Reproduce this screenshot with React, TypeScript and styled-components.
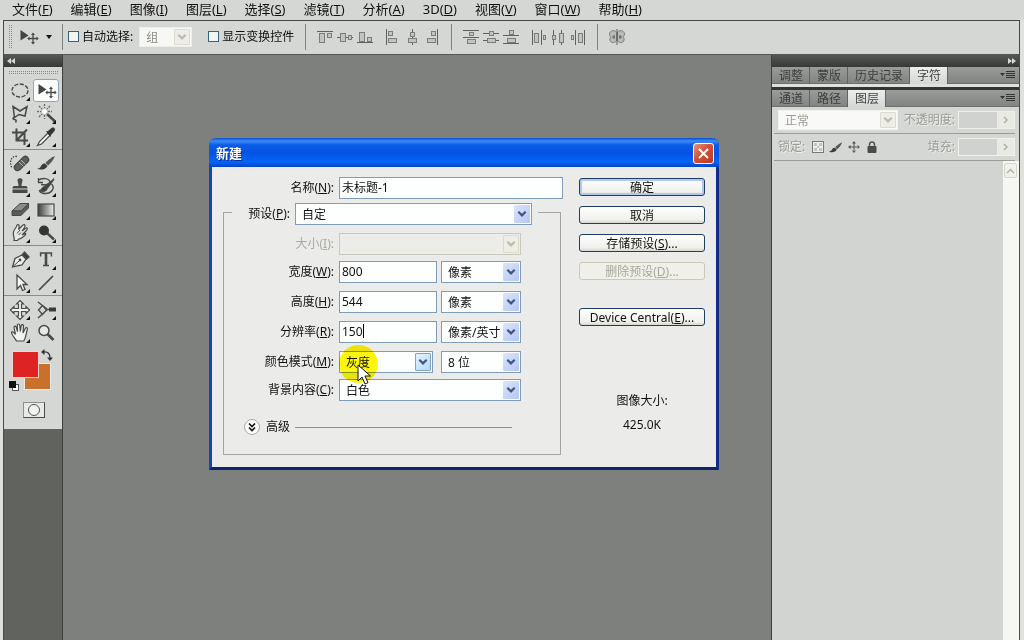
import React, { useState } from "react";
import styled, { createGlobalStyle, css } from "styled-components";

const FONT = '"Noto Sans", "Noto Sans CJK SC", sans-serif';

const GlobalStyle = createGlobalStyle`
  *, *::before, *::after { box-sizing: border-box; }
  html, body { margin: 0; background: #d5d7d4; }
  body, button, input, select {
    font-family: ${FONT};
    font-size: 12px;
    line-height: 16px;
    color: #111;
  }
  button, input, select { margin: 0; }
  fieldset { min-width: 0; }
`;

/* ---------- shell ---------- */

const Shell = styled.div`
  display: flex;
  flex-direction: column;
  min-height: 100vh;
  padding: 0 4px 0 3px;
  background: #dfe1dd;
  overflow: hidden;
`;

const MenuBar = styled.nav`
  display: flex;
  align-items: flex-start;
  gap: 18px;
  height: 20px;
  margin: 0 -4px 0 -3px;
  padding-left: 12px;
  background: #d5d7d4;
`;

const MenuItem = styled.button`
  border: 0;
  padding: 0;
  background: none;
  font-size: 13px;
  line-height: 18px;
  white-space: nowrap;
`;

const Frame = styled.div`
  flex: 1;
  display: flex;
  flex-direction: column;
  border: 1px solid #484a47;
  border-bottom: 0;
`;

const Workspace = styled.main`
  flex: 1;
  display: flex;
`;

const Canvas = styled.section`
  position: relative;
  flex: 1;
  min-width: 0;
  background: #7e807d;
  border-left: 1px solid #3d3f3c;
  border-right: 1px solid #3d3f3c;
`;

/* ---------- options bar ---------- */

const OptionsBar = styled.div`
  display: flex;
  align-items: center;
  height: 34px;
  padding-bottom: 2px;
  padding-left: 4px;
  background: #d5d7d4;
  border-bottom: 1px solid #555754;
`;

const Grip = styled.span<{ $wide?: boolean }>`
  display: block;
  width: ${(p) => (p.$wide ? "50px" : "4px")};
  height: ${(p) => (p.$wide ? "4px" : "24px")};
  margin: ${(p) => (p.$wide ? "4px auto 4px" : "0 8px 0 0")};
  background-image: conic-gradient(#8d8f8c 25%, transparent 0);
  background-size: 2px 2px;
`;

const ToolButton = styled.button<{ $active?: boolean }>`
  display: flex;
  align-items: center;
  justify-content: center;
  width: 26px;
  height: 23px;
  padding: 0;
  border: 1px solid ${(p) => (p.$active ? "#8fa3b5" : "transparent")};
  border-radius: 3px;
  background: ${(p) => (p.$active ? "#fbfcfc" : "none")};
`;

const PresetButton = styled.button`
  display: flex;
  align-items: center;
  gap: 6px;
  width: 42px;
  padding: 0;
  border: 0;
  background: none;
`;

const Divider = styled.span`
  width: 1px;
  height: 26px;
  background: #7f817e;
`;

const Check = styled.label<{ $gap: string }>`
  display: flex;
  align-items: center;
  gap: 3px;
  padding-left: ${(p) => p.$gap};
  white-space: nowrap;
  input {
    appearance: none;
    width: 11px;
    height: 11px;
    border: 1px solid #35627f;
    background: #f3f5f3;
  }
`;

const AlignGroup = styled.div`
  display: flex;
  gap: 4px;
  padding-left: 11px;
`;

const AlignButton = styled.button`
  display: flex;
  width: 16px;
  height: 16px;
  padding: 0;
  border: 0;
  background: none;
`;

/* ---------- shared select ---------- */

type SelectTone = "normal" | "disabled" | "hot";

const SelectBox = styled.span<{ $tone: SelectTone; $width: string }>`
  position: relative;
  display: flex;
  flex: none;
  width: ${(p) => p.$width};
  height: 22px;
  border: 1px solid ${(p) => (p.$tone === "disabled" ? "#c8c8bc" : "#7f9db9")};
  background: ${(p) => (p.$tone === "disabled" ? "#ecece8" : "#fdfefe")};
  select {
    flex: 1;
    min-width: 0;
    padding: 2px 18px 0 6px;
    border: 0;
    outline: 0;
    appearance: none;
    background: none;
    color: inherit;
    opacity: 1;
  }
`;

const SelectArrow = styled.span<{ $tone: SelectTone }>`
  position: absolute;
  top: 1px;
  right: 1px;
  bottom: 1px;
  width: 16px;
  display: flex;
  align-items: center;
  justify-content: center;
  pointer-events: none;
  border-radius: 1px;
  color: #3f5583;
  background: linear-gradient(135deg, #dbe6fc, #b4c6f2);
  ${(p) =>
    p.$tone === "disabled" &&
    css`
      color: #bcbcb0;
      background: #eeeee6;
      border: 1px solid #dddbcf;
    `}
  ${(p) =>
    p.$tone === "hot" &&
    css`
      background: linear-gradient(135deg, #e4f3ff, #b3d9fb);
      border: 1px solid #83a3c4;
    `}
`;

const Chevron = () => (
  <svg width="10" height="8" viewBox="0 0 10 8" fill="none" stroke="currentColor" strokeWidth="2.2">
    <path d="M1.3 1.7 5 5.4 8.7 1.7" />
  </svg>
);

function Select(props: {
  id?: string;
  label?: string;
  value: string;
  width: string;
  tone?: SelectTone;
}) {
  const tone = props.tone ?? "normal";
  return (
    <SelectBox $tone={tone} $width={props.width}>
      <select id={props.id} aria-label={props.label} disabled={tone === "disabled"}>
        <option>{props.value}</option>
      </select>
      <SelectArrow $tone={tone}>
        <Chevron />
      </SelectArrow>
    </SelectBox>
  );
}

const GroupSelect = styled.div`
  display: flex;
  padding-left: 6px;
  ${SelectBox} {
    height: 20px;
    border-color: #eceee8;
    background: #f7f8f5;
    color: #8b8d88;
  }
`;

/* ---------- tool column ---------- */

const ToolColumn = styled.aside`
  flex: none;
  width: 58px;
  background: #61635f;
`;

const DockHeader = styled.header<{ $right?: boolean }>`
  display: flex;
  align-items: center;
  justify-content: ${(p) => (p.$right ? "flex-end" : "flex-start")};
  height: 12px;
  padding: 0 3px;
  background: linear-gradient(#555754, #373937);
  color: #d8dad7;
`;

const ToolBody = styled.div`
  height: 362px;
  background: #d5d7d4;
  overflow: hidden;
`;

const ToolGroup = styled.div`
  display: grid;
  grid-template-columns: 26px 26px;
  justify-content: center;
  padding: 0 0 1px;
  & + & {
    border-top: 1px solid #8b8d8a;
    padding-top: 2px;
  }
`;

const SwatchArea = styled.div`
  position: relative;
  height: 50px;
`;

const Swatch = styled.button<{ $front?: boolean }>`
  position: absolute;
  width: 27px;
  height: 27px;
  padding: 0;
  left: ${(p) => (p.$front ? "8px" : "20px")};
  top: ${(p) => (p.$front ? "6px" : "18px")};
  border: 1px solid ${(p) => (p.$front ? "#f6d3d0" : "#e9ebe8")};
  background: ${(p) => (p.$front ? "#de2422" : "#c8702c")};
`;

const SwatchMark = styled.button<{ $swap?: boolean }>`
  position: absolute;
  display: flex;
  left: ${(p) => (p.$swap ? "37px" : "5px")};
  top: ${(p) => (p.$swap ? "4px" : "36px")};
  padding: 0;
  border: 0;
  background: none;
`;

const MaskButton = styled.button`
  display: flex;
  align-items: center;
  justify-content: center;
  width: 22px;
  height: 16px;
  margin: 7px auto 0 19px;
  padding: 0;
  border: 1px solid;
  border-color: #8f918e #4b4d4a #4b4d4a #8f918e;
  background: #e8eae7;
`;

/* ---------- right panels ---------- */

const PanelColumn = styled.aside`
  display: flex;
  flex-direction: column;
  flex: none;
  width: 247px;
  background: #d5d7d4;
`;

const TabBar = styled.div`
  display: flex;
  height: 17px;
  background: linear-gradient(#9a9c99, #828481);
  border-bottom: 1px solid #6c6e6b;
`;

const Tab = styled.button<{ $active?: boolean }>`
  height: 17px;
  padding: 0 6px 0 7px;
  border: 0;
  border-right: 1px solid #62645f;
  background: ${(p) => (p.$active ? "linear-gradient(#eceeeb, #d5d7d4)" : "none")};
  color: ${(p) => (p.$active ? "#444643" : "#3c3e3b")};
  line-height: 16px;
  white-space: nowrap;
`;

const PanelMenu = styled.button`
  display: flex;
  align-items: center;
  margin-left: auto;
  padding: 0 3px;
  border: 0;
  background: none;
`;

const PanelGap = styled.div`
  height: 6px;
  background: linear-gradient(#dfe1de 3px, #333532 3px);
`;

const PanelRow = styled.div`
  display: flex;
  align-items: center;
  height: 27px;
  margin: 0 4px 0 2px;
  padding: 1px 0 1px 4px;
  border-bottom: 1px solid #9a9c99;
  color: #9b9d94;
  text-shadow: 1px 1px #edefec;
  ${SelectBox} {
    height: 20px;
    border-color: #f1f2ea;
    background: #f9faf7;
    margin-right: 4px;
  }
`;

const LockTools = styled.span`
  display: flex;
  gap: 4px;
  padding-left: 6px;
`;

const Stepper = styled.span`
  display: flex;
  width: 57px;
  height: 18px;
  margin-left: auto;
  border: 1px solid #eff0e8;
  input {
    flex: 1;
    min-width: 0;
    padding: 0;
    border: 0;
    background: #d0d2cf;
  }
  button {
    display: flex;
    align-items: center;
    justify-content: center;
    width: 17px;
    padding: 0;
    border: 0;
    background: #e9eae4;
    color: #aeb0a8;
  }
`;

const EndLabel = styled.label`
  margin-left: auto;
  & + ${Stepper} {
    margin-left: 3px;
  }
`;

const LayerArea = styled.div`
  flex: 1;
  display: flex;
  justify-content: flex-end;
  background: #d2d4d1;
`;

const ScrollTrack = styled.div`
  width: 16px;
  padding: 2px 1px 0;
  background: #f6f7f3;
`;

const ScrollButton = styled.button`
  display: flex;
  align-items: center;
  justify-content: center;
  width: 13px;
  height: 15px;
  padding: 0;
  border: 1px solid #d4d5cb;
  border-radius: 2px;
  background: #f0f1ea;
  color: #b4b5aa;
`;

/* ---------- dialog ---------- */

const Dialog = styled.form`
  position: absolute;
  left: 146px;
  top: 83px;
  width: 510px;
  border: 3px solid #0c40b4;
  border-color: #0a4fe0 #122c8a #10246e #1446b0;
  border-top: 0;
  border-radius: 7px 7px 0 0;
  background: #ebebe9;
`;

const TitleBar = styled.header`
  display: flex;
  align-items: center;
  justify-content: space-between;
  height: 29px;
  margin: 0 -3px;
  padding: 1px 5px 0 7px;
  border-radius: 7px 7px 0 0;
  background: linear-gradient(#0a4bc8, #3a8bf8 3px, #0a5ce8 7px, #0353e2 15px, #0464fa 24px, #0242c4);
  h1 {
    margin: 0;
    font-size: 13px;
    font-weight: 700;
    line-height: 16px;
    color: #fff;
    text-shadow: 1px 1px #0b2f8c;
  }
`;

const CloseButton = styled.button`
  display: flex;
  align-items: center;
  justify-content: center;
  width: 21px;
  height: 21px;
  padding: 0;
  border: 1px solid #fff;
  border-radius: 3px;
  background: linear-gradient(135deg, #e8937a, #d0523a 45%, #b93a20);
`;

const DialogBody = styled.div`
  display: flex;
  justify-content: space-between;
  padding: 10px 11px 12px;
`;

const FormSide = styled.div`
  width: 351px;
`;

const Row = styled.div<{ $compact?: boolean }>`
  display: flex;
  align-items: center;
  height: ${(p) => (p.$compact ? "26px" : "30px")};
`;

const NameRow = styled.div`
  display: flex;
  align-items: center;
  height: 22px;
`;

const Label = styled.label<{ $width: string; $dim?: boolean }>`
  flex: none;
  width: ${(p) => p.$width};
  padding-right: 5px;
  text-align: right;
  white-space: nowrap;
  color: ${(p) => (p.$dim ? "#a9aaa0" : "#111")};
`;

const Field = styled.span<{ $width: string }>`
  position: relative;
  display: flex;
  flex: none;
  width: ${(p) => p.$width};
  input {
    width: 100%;
    height: 22px;
    padding: 0 2px 2px;
    border: 1px solid #7f9db9;
    outline: 0;
    background: #fdfefe;
  }
`;

const Caret = styled.span`
  position: absolute;
  left: 24px;
  top: 3px;
  width: 1px;
  height: 14px;
  background: #000;
`;

const Gap = styled.span`
  width: 4px;
`;

const PresetSet = styled.fieldset`
  margin: 0;
  width: 338px;
  padding: 6px 0 14px;
  border: 1px solid #a3a4a0;
`;

const PresetLegend = styled.legend`
  display: flex;
  align-items: center;
  width: 306px;
  margin-left: 8px;
  padding: 4px 0 0;
`;

const Advanced = styled.div`
  display: flex;
  align-items: center;
  gap: 5px;
  margin: 11px 48px 0 20px;
  height: 26px;
  button {
    display: flex;
    align-items: center;
    gap: 6px;
    padding: 0;
    border: 0;
    background: none;
  }
  hr {
    flex: 1;
    margin: 0;
    border: 0;
    border-top: 1px solid #8e8f8c;
  }
`;

const ButtonSide = styled.div`
  display: flex;
  flex-direction: column;
  gap: 10px;
  width: 126px;
  margin: 1px 0 0;
`;

const PushButton = styled.button<{ $default?: boolean; $spaced?: boolean }>`
  height: 18px;
  padding: 2px 0 0;
  margin-top: ${(p) => (p.$spaced ? "18px" : "0")};
  border: 1px solid #1e3f63;
  border-radius: 3px;
  background: linear-gradient(#fefefe, #f0f0ec 80%, #d8d6ce);
  line-height: 14px;
  white-space: nowrap;
  ${(p) =>
    p.$default &&
    css`
      box-shadow: inset 0 0 0 2px #b3c8f0;
    `}
  &:disabled {
    border-color: #cbc9ba;
    background: #f1f0e8;
    color: #a7a89e;
  }
`;

const SizeInfo = styled.dl`
  margin: 53px 0 0;
  text-align: center;
  dt, dd {
    margin: 0;
    line-height: 24px;
  }
`;

const Spotlight = styled.span`
  position: absolute;
  left: 276px;
  top: 290px;
  width: 39px;
  height: 38px;
  border-radius: 50%;
  background: #fff60c;
  mix-blend-mode: multiply;
  pointer-events: none;
`;

const Pointer = styled.svg`
  position: absolute;
  left: 294px;
  top: 309px;
  pointer-events: none;
`;

/* ---------- icons ---------- */

const Icon = ({ children, corner }: { children: React.ReactNode; corner?: boolean }) => (
  <svg width="24" height="22" viewBox="0 0 24 22" fill="none" stroke="#484a47" strokeWidth="1.4">
    {children}
    {corner && <path d="M22 17v4h-4z" fill="#111" stroke="none" />}
  </svg>
);

const MoveArt = () => (
  <>
    <path d="M4.5 4v10.500l8-5z" fill="#444643" stroke="none" />
    <path d="M17 8v9M12.500 12.500h9" strokeWidth="1.300" />
    <path d="M17 6.600l2 2.300h-4zM17 18.400l2-2.300h-4zM11.300 12.500l2.200-2v4zM22.700 12.500l-2.200-2v4z" fill="#444643" stroke="none" />
  </>
);

const FourWay = () => (
  <path
    d="M12 1.500l3.500 3.500h-2v4.500H18v-2l3.500 3.500L18 14.500v-2h-4.500V17h2L12 20.500 8.500 17h2v-4.500H6v2L2.500 11 6 7.500v2h4.500V5h-2z"
    fill="#f4f6f3"
    strokeWidth="1.200"
  />
);

const BrushArt = () => (
  <>
    <path d="M21 3c-4 1.500-7 4-9.500 7l2.500 2.500C17 10 19.500 7 21 3z" fill="#555754" stroke="none" />
    <path d="M11 10.500c-3 0-3.500 2-4.500 3.500-.8 1-2 1.500-3.500 1.800 4 1.700 9 .7 10.500-2.800z" fill="#3a3c39" stroke="none" />
  </>
);

const toolGroups: { name: string; corner: boolean; active?: boolean; art: React.ReactNode }[][] = [
  [
    { name: "椭圆选框", corner: true, art: <ellipse cx="12" cy="10.5" rx="8" ry="6.5" strokeDasharray="4 1.600" /> },
    { name: "移动", corner: false, active: true, art: <MoveArt /> },
    { name: "多边形套索", corner: true, art: <path d="M5 3.500l7 4.500 7-4.500-2 9.500-6-1.500-4.500 3zM7 14c-2.500 0-2.500 2.500-.5 2.500s2 1.500 1 3" strokeWidth="1.500" /> },
    {
      name: "魔棒",
      corner: true,
      art: (
        <>
          <path d="M13 11l8 7.500" strokeWidth="2.600" />
          <path d="M10.500 1v4M10.500 12v4M3 8.500h4M14 8.500h4M5 3l3 3M16 3l-3 3M5 14l3-3" strokeDasharray="2 1" stroke="#6b6d6a" />
          <circle cx="10.500" cy="8.500" r="3" fill="#fff" stroke="#a5a7a4" strokeWidth=".8" />
        </>
      ),
    },
    { name: "裁剪", corner: true, art: <path d="M8.500 2.500v12H20M4 6.500h12.500V19M8.500 14.500L19 3.500" strokeWidth="2" /> },
    {
      name: "吸管",
      corner: true,
      art: (
        <>
          <path d="M14 7l-8.500 8.500-2 4 4-1.500L16 9.500z" fill="#f4f6f3" strokeWidth="1.200" />
          <path d="M12 5.500l2-.5L17.500 2c2.500-1.500 4.500 1 3 3l-3.500 4-.5 2z" fill="#343633" stroke="none" />
        </>
      ),
    },
  ],
  [
    {
      name: "修复画笔",
      corner: true,
      art: (
        <>
          <path d="M9 3.500C3 2.500 1 9 4 15" strokeDasharray="1.500 1.200" />
          <path d="M7 12.500L15.500 4c3-2 6.500 1.500 4.500 4.500L11.500 17c-3.500 2-6.500-1.500-4.500-4.500z" fill="#5e605d" />
          <path d="M11 9l4.500 4.500M13 7l4.500 4.500" stroke="#b4b6b3" strokeWidth="1" />
        </>
      ),
    },
    { name: "画笔", corner: true, art: <BrushArt /> },
    { name: "仿制图章", corner: true, art: <path d="M9.500 4c0-2.500 5-2.500 5 0 0 2-1 3-1 6H18c1 0 1.500 1 1.500 2.500h-15C4.500 11 5 10 6 10h4.500c0-3-1-4-1-6zM4.500 13.500h15V17h-15z" fill="#484a47" stroke="none" /> },
    {
      name: "历史记录画笔",
      corner: true,
      art: (
        <>
          <path d="M4 4.500c4-3 11-2.500 12 1.500 0 3-5 3-9 2.500M4.500 2v4.500H9M17.500 8c4 4 0 9.500-6 9.500-3 0-5-1-6-2.500" strokeWidth="1.400" />
          <path d="M20 3l-8.500 7 2 2zM11 10.500c-2.500 0-2.500 3-5 4 3 1.500 6.500.5 7-2z" fill="#3a3c39" />
        </>
      ),
    },
    {
      name: "橡皮擦",
      corner: true,
      art: (
        <>
          <path d="M12 4.500h8.500L13 12H4z" fill="#8a8c89" strokeWidth="1" />
          <path d="M4 12h9l7.500-7.500V9L13 16.500H4z" fill="#5a5c59" strokeWidth="1" />
        </>
      ),
    },
    {
      name: "渐变",
      corner: true,
      art: (
        <>
          <defs>
            <linearGradient id="toolGradient">
              <stop offset="0" stopColor="#3d3f3c" />
              <stop offset="1" stopColor="#eceeeb" />
            </linearGradient>
          </defs>
          <rect x="4" y="5" width="16" height="12" fill="url(#toolGradient)" strokeWidth="1.200" />
        </>
      ),
    },
    {
      name: "涂抹",
      corner: true,
      art: (
        <>
          <path d="M6 18.500c1-3-1.500-5-.5-8.500C6 7 8.500 6 9 3c2-1.500 3 1 1.500 4.500L15 3c2-1 2.500.5 1.500 2.500L14 9l4-3c2-.5 1.500 1.500 0 3l-4 4 3.500-1.500c1 .5-1.500 3-4 4.500-1.500 1-3 .5-4 2.500z" fill="#e6e8e5" strokeWidth="1.200" />
          <path d="M9 11.500l3-3.500M10.500 13l2.500-2.500" strokeWidth="1" />
        </>
      ),
    },
    {
      name: "减淡",
      corner: true,
      art: (
        <>
          <path d="M13 11l7 6.500" strokeWidth="2.400" />
          <circle cx="10" cy="8.500" r="5" fill="#343633" stroke="none" />
        </>
      ),
    },
  ],
  [
    {
      name: "钢笔",
      corner: true,
      art: (
        <>
          <path d="M4.500 18L7 9.500l7-3.500 4 4-4 6z" fill="#eceeeb" strokeWidth="1.300" />
          <path d="M14.500 5.500l2-2.500 4.500 5-2.500 2z" fill="#3a3c39" />
          <path d="M5 17.500l6-5.500" strokeWidth="1" />
          <circle cx="12" cy="11" r="1.400" fill="#484a47" stroke="none" />
        </>
      ),
    },
    {
      name: "文字",
      corner: true,
      art: (
        <>
          <path d="M6.600 7.500V4h10.800v3.500M9 16.500h6" strokeWidth="1.500" />
          <path d="M12 4v12.500" strokeWidth="2.600" />
        </>
      ),
    },
    { name: "路径选择", corner: true, art: <path d="M9 3v14l3.500-3.500 2 5 2.500-1-2-5h4z" fill="#f4f6f3" strokeWidth="1.300" /> },
    { name: "直线", corner: true, art: <path d="M5 18L19 4" strokeWidth="1.700" /> },
  ],
  [
    { name: "三维旋转", corner: true, art: <FourWay /> },
    {
      name: "三维环绕",
      corner: true,
      art: (
        <>
          <path d="M4 3l9 7M13 11l-9 8M4.500 11l4-4.500 4 4.500-4 4.500z" strokeWidth="1.400" />
          <path d="M13 10.500h3" />
          <path d="M15 8.500h7v4h-7z" fill="#3a3c39" stroke="none" />
        </>
      ),
    },
    { name: "抓手", corner: true, art: <path d="M8.500 19C7 16 4 13.500 3.500 10.500c.5-1.500 2-.5 4 2L6 5.500c0-2 2-1.500 2.300 0L9.500 9.500 9.300 3.500c0-2 2.300-2 2.500 0l.5 6 1-6c.5-1.500 2.500-1 2.200.7L15 11l2.500-5c1-1 2.300 0 1.800 1.500-1.500 4-1 8-3.500 11.500z" fill="#f1f3f0" strokeWidth="1.200" /> },
    {
      name: "缩放",
      corner: false,
      art: (
        <>
          <circle cx="10" cy="8.500" r="5" fill="#e6e8e5" strokeWidth="1.500" />
          <path d="M13.500 12l6 6" strokeWidth="2.600" />
        </>
      ),
    },
  ],
];

type Block = [number, number, number, number];
const alignArt: { name: string; lines: string; blocks: Block[] }[][] = [
  [
    { name: "顶对齐", lines: "M0 2.500h16", blocks: [[2, 4, 6, 10], [10, 4, 5, 5]] },
    { name: "垂直居中对齐", lines: "M0 8.500h16", blocks: [[3, 4, 6, 9], [11, 6, 4, 5]] },
    { name: "底对齐", lines: "M0 13.500h16", blocks: [[2, 3, 6, 10], [10, 8, 5, 5]] },
  ],
  [
    { name: "左对齐", lines: "M2.500 0v16", blocks: [[4, 2, 5, 5], [4, 9, 9, 5]] },
    { name: "水平居中对齐", lines: "M8.500 0v16", blocks: [[6, 3, 5, 5], [4, 9, 9, 5]] },
    { name: "右对齐", lines: "M13.500 0v16", blocks: [[7, 2, 5, 5], [3, 9, 9, 5]] },
  ],
  [
    { name: "按顶分布", lines: "M0 1.500h16M0 8.500h16", blocks: [[6, 3, 5, 4], [4, 10, 9, 5]] },
    { name: "垂直居中分布", lines: "M0 4.500h16M0 11.500h16", blocks: [[6, 2, 5, 5], [4, 9, 9, 5]] },
    { name: "按底分布", lines: "M0 6.500h16M0 14.500h16", blocks: [[6, 1, 5, 5], [4, 9, 9, 5]] },
  ],
  [
    { name: "按左分布", lines: "M2.500 1v15M11.500 1v15", blocks: [[4, 4, 5, 10], [13, 6, 3, 5]] },
    { name: "水平居中分布", lines: "M3.500 1v15M11.500 1v15", blocks: [[2, 6, 4, 5], [9, 4, 5, 10]] },
    { name: "按右分布", lines: "M5.500 1v15M14.500 1v15", blocks: [[1, 6, 3, 5], [8, 4, 5, 10]] },
  ],
];

const AlignIcons = ({ index }: { index: number }) => (
  <AlignGroup>
    {alignArt[index].map((a) => (
      <AlignButton key={a.name} type="button" aria-label={a.name}>
        <svg width="16" height="16" viewBox="0 0 16 16" fill="#c2c4c1" stroke="#7b7d7a">
          <path d={a.lines} stroke="#5f615e" />
          {a.blocks.map(([x, y, w, h]) => (
            <rect key={`${x}-${y}`} x={x + 0.5} y={y + 0.5} width={w - 1} height={h - 1} />
          ))}
        </svg>
      </AlignButton>
    ))}
  </AlignGroup>
);

const MenuLines = () => (
  <svg width="16" height="10" viewBox="0 0 16 10" fill="#333532">
    <path d="M0 3h5L2.500 6zM6 1h9v1H6zM6 3h9v1H6zM6 5h9v1H6zM6 7h9v1H6z" />
  </svg>
);

const DoubleArrow = ({ back }: { back?: boolean }) => (
  <svg width="9" height="6" viewBox="0 0 9 6" fill="currentColor">
    <path d={back ? "M4 0v6L0 3zM8 0v6L4 3z" : "M1 0v6l4-3zM5 0v6l4-3z"} />
  </svg>
);

const Accel = ({ text, k, tail = "" }: { text: string; k: string; tail?: string }) => (
  <>
    {text}(<u>{k}</u>){tail}
  </>
);

/* ---------- parts ---------- */

const menus: [string, string][] = [
  ["文件", "F"], ["编辑", "E"], ["图像", "I"], ["图层", "L"], ["选择", "S"], ["滤镜", "T"],
  ["分析", "A"], ["3D", "D"], ["视图", "V"], ["窗口", "W"], ["帮助", "H"],
];

function Options() {
  return (
    <OptionsBar>
      <Grip />
      <PresetButton type="button" aria-label="移动工具预设">
        <svg width="20" height="20" viewBox="4 1 20 20" fill="none" stroke="#484a47">
          <MoveArt />
        </svg>
        <svg width="6" height="4" viewBox="0 0 6 4">
          <path d="M0 0h6L3 4z" fill="#111" />
        </svg>
      </PresetButton>
      <Divider />
      <Check $gap="5px">
        <input type="checkbox" />
        自动选择:
      </Check>
      <GroupSelect>
        <Select label="自动选择对象" value="组" width="53px" tone="disabled" />
      </GroupSelect>
      <Check $gap="16px">
        <input type="checkbox" />
        显示变换控件
      </Check>
      <AlignGroup>
        <Divider />
      </AlignGroup>
      <AlignIcons index={0} />
      <AlignIcons index={1} />
      <AlignGroup>
        <Divider />
      </AlignGroup>
      <AlignIcons index={2} />
      <AlignIcons index={3} />
      <AlignGroup>
        <Divider />
      </AlignGroup>
      <AlignGroup>
        <AlignButton type="button" aria-label="自动对齐图层">
          <svg width="16" height="16" viewBox="0 0 16 16" fill="#b9bbb8" stroke="#7b7d7a">
            <path d="M7.500 3C4 0 .5 2.500.5 5c0 1.500 1 2 1 3s-1 1.500-.5 3c.5 3 4 3.500 6.500 1zM8.500 3c3.500-3 7-.5 7 2 0 1.500-1 2-1 3s1 1.500.5 3c-.5 3-4 3.500-6.500 1z" />
            <path d="M8 0v16M3 8h3M10 8h3M5 6v4M11 6v4" stroke="#5f615e" fill="none" />
          </svg>
        </AlignButton>
      </AlignGroup>
    </OptionsBar>
  );
}

function Tools() {
  return (
    <ToolColumn>
      <DockHeader>
        <DoubleArrow back />
      </DockHeader>
      <ToolBody>
        <Grip $wide />
        {toolGroups.map((group, i) => (
          <ToolGroup key={i}>
            {group.map((t) => (
              <ToolButton key={t.name} type="button" aria-label={t.name} $active={t.active}>
                <Icon corner={t.corner}>{t.art}</Icon>
              </ToolButton>
            ))}
          </ToolGroup>
        ))}
        <SwatchArea>
          <Swatch type="button" aria-label="背景色" />
          <Swatch type="button" aria-label="前景色" $front />
          <SwatchMark type="button" aria-label="切换颜色" $swap>
            <svg width="12" height="12" viewBox="0 0 12 12" fill="none" stroke="#333532" strokeWidth="1.300">
              <path d="M3 3c4-.5 6 2 6 6" />
              <path d="M0 3l3.500-3v6zM9 12L6 8.500h6z" fill="#333532" stroke="none" />
            </svg>
          </SwatchMark>
          <SwatchMark type="button" aria-label="默认颜色">
            <svg width="11" height="11" viewBox="0 0 11 11">
              <rect x="3.500" y="3.500" width="6" height="6" fill="#fff" stroke="#555" />
              <rect x="0" y="0" width="7" height="7" fill="#111" />
            </svg>
          </SwatchMark>
        </SwatchArea>
        <MaskButton type="button" aria-label="快速蒙版">
          <svg width="14" height="14" viewBox="0 0 14 14">
            <circle cx="7" cy="7" r="5.500" fill="#f1f3f0" stroke="#555" />
          </svg>
        </MaskButton>
      </ToolBody>
    </ToolColumn>
  );
}

function Tabs({ names, active }: { names: string[]; active: string }) {
  return (
    <TabBar>
      {names.map((n) => (
        <Tab key={n} type="button" $active={n === active}>
          {n}
        </Tab>
      ))}
      <PanelMenu type="button" aria-label="面板菜单">
        <MenuLines />
      </PanelMenu>
    </TabBar>
  );
}

const PercentField = ({ id }: { id: string }) => (
  <Stepper>
    <input id={id} disabled />
    <button type="button" disabled aria-label="展开滑块">
      <svg width="5" height="8" viewBox="0 0 5 8" fill="none" stroke="currentColor" strokeWidth="1.500">
        <path d="M1 1l3 3-3 3" />
      </svg>
    </button>
  </Stepper>
);

function Panels() {
  return (
    <PanelColumn>
      <DockHeader $right>
        <DoubleArrow />
      </DockHeader>
      <Tabs names={["调整", "蒙版", "历史记录", "字符"]} active="字符" />
      <PanelGap />
      <Tabs names={["通道", "路径", "图层"]} active="图层" />
      <PanelRow>
        <Select label="混合模式" value="正常" width="120px" tone="disabled" />
        <EndLabel htmlFor="opacity">不透明度:</EndLabel>
        <PercentField id="opacity" />
      </PanelRow>
      <PanelRow>
        锁定:
        <LockTools>
          <svg width="14" height="14" viewBox="0 0 14 14">
            <rect x="1.500" y="1.500" width="11" height="11" fill="#eceeeb" stroke="#777976" />
            <path d="M3 3h3v3H3zM8 3h3v3H8zM6 6h2v2H6zM3 8h3v3H3zM8 8h3v3H8z" fill="#c4c6c3" />
          </svg>
          <svg width="14" height="14" viewBox="3 2 19 15">
            <BrushArt />
          </svg>
          <svg width="14" height="14" viewBox="0 0 14 14" fill="#555754">
            <path d="M6.500 3h1v3.500H11v1H7.500V11h-1V7.500H3v-1h3.500zM7 1l2 2.500H5zM7 13l2-2.500H5zM1 7l2.500-2v4zM13 7l-2.500-2v4z" />
          </svg>
          <svg width="14" height="14" viewBox="0 0 14 14">
            <path d="M4.500 7V4.500c0-3.500 5-3.500 5 0V7" fill="none" stroke="#555754" strokeWidth="1.500" />
            <rect x="2.500" y="6" width="9" height="7" rx="1" fill="#4b4d4a" />
          </svg>
        </LockTools>
        <EndLabel htmlFor="fill">填充:</EndLabel>
        <PercentField id="fill" />
      </PanelRow>
      <LayerArea>
        <ScrollTrack>
          <ScrollButton type="button" aria-label="向上滚动">
            <svg width="9" height="6" viewBox="0 0 9 6" fill="none" stroke="currentColor" strokeWidth="1.500">
              <path d="M1 5l3.500-3.500L8 5" />
            </svg>
          </ScrollButton>
        </ScrollTrack>
      </LayerArea>
    </PanelColumn>
  );
}

function NumberRow(props: {
  id: string;
  text: string;
  k: string;
  value: string;
  onChange: (v: string) => void;
  unit: string;
  caret?: boolean;
}) {
  return (
    <Row>
      <Label htmlFor={props.id} $width="115px">
        <Accel text={props.text} k={props.k} tail=":" />
      </Label>
      <Field $width="98px">
        <input id={props.id} value={props.value} onChange={(e) => props.onChange(e.target.value)} />
        {props.caret && <Caret />}
      </Field>
      <Gap />
      <Select label={`${props.text}单位`} value={props.unit} width="80px" />
    </Row>
  );
}

function NewDocument() {
  const [name, setName] = useState("未标题-1");
  const [width, setWidth] = useState("800");
  const [height, setHeight] = useState("544");
  const [resolution, setResolution] = useState("150");
  return (
    <Dialog onSubmit={(e) => e.preventDefault()}>
      <TitleBar>
        <h1>新建</h1>
        <CloseButton type="button" aria-label="关闭">
          <svg width="13" height="13" viewBox="0 0 13 13" stroke="#fff" strokeWidth="2">
            <path d="M2 2l9 9M11 2l-9 9" />
          </svg>
        </CloseButton>
      </TitleBar>
      <DialogBody>
        <FormSide>
          <NameRow>
            <Label htmlFor="doc-name" $width="116px">
              <Accel text="名称" k="N" tail=":" />
            </Label>
            <Field $width="224px">
              <input id="doc-name" value={name} onChange={(e) => setName(e.target.value)} />
            </Field>
          </NameRow>
          <PresetSet>
            <PresetLegend>
              <Label htmlFor="preset" $width="63px">
                <Accel text="预设" k="P" tail=":" />
              </Label>
              <Select id="preset" value="自定" width="237px" />
            </PresetLegend>
            <Row $compact>
              <Label htmlFor="size" $width="115px" $dim>
                <Accel text="大小" k="I" tail=":" />
              </Label>
              <Select id="size" value="" width="182px" tone="disabled" />
            </Row>
            <NumberRow id="w" text="宽度" k="W" value={width} onChange={setWidth} unit="像素" />
            <NumberRow id="h" text="高度" k="H" value={height} onChange={setHeight} unit="像素" />
            <NumberRow id="r" text="分辨率" k="R" value={resolution} onChange={setResolution} unit="像素/英寸" caret />
            <Row>
              <Label htmlFor="mode" $width="115px">
                <Accel text="颜色模式" k="M" tail=":" />
              </Label>
              <Select id="mode" value="灰度" width="94px" tone="hot" />
              <Gap />
              <Gap />
              <Select label="位深度" value="8 位" width="80px" />
            </Row>
            <Row $compact>
              <Label htmlFor="bg" $width="115px">
                <Accel text="背景内容" k="C" tail=":" />
              </Label>
              <Select id="bg" value="白色" width="182px" />
            </Row>
            <Advanced>
              <button type="button">
                <svg width="16" height="16" viewBox="0 0 16 16" fill="none" stroke="#111" strokeWidth="1.600">
                  <circle cx="8" cy="8" r="7.500" fill="#fbfbfa" stroke="#a9aaa6" strokeWidth="1" />
                  <path d="M5 4.500l3 3 3-3M5 8.500l3 3 3-3" />
                </svg>
                高级
              </button>
              <hr />
            </Advanced>
          </PresetSet>
        </FormSide>
        <ButtonSide>
          <PushButton type="submit" $default>确定</PushButton>
          <PushButton type="button">取消</PushButton>
          <PushButton type="button">
            <Accel text="存储预设" k="S" tail="..." />
          </PushButton>
          <PushButton type="button" disabled>
            <Accel text="删除预设" k="D" tail="..." />
          </PushButton>
          <PushButton type="button" $spaced>
            <Accel text="Device Central" k="E" tail="..." />
          </PushButton>
          <SizeInfo>
            <dt>图像大小:</dt>
            <dd>425.0K</dd>
          </SizeInfo>
        </ButtonSide>
      </DialogBody>
    </Dialog>
  );
}

export default function App() {
  return (
    <>
      <GlobalStyle />
      <Shell>
        <MenuBar>
          {menus.map(([text, k]) => (
            <MenuItem key={k} type="button">
              <Accel text={text} k={k} />
            </MenuItem>
          ))}
        </MenuBar>
        <Frame>
          <Options />
          <Workspace>
            <Tools />
            <Canvas>
              <NewDocument />
              <Spotlight />
              <Pointer width="14" height="22" viewBox="0 0 14 22">
                <path d="M1 1v16l4-4 3 7 3-1.300-3-6.700h5.500z" fill="#fff" stroke="#111" />
              </Pointer>
            </Canvas>
            <Panels />
          </Workspace>
        </Frame>
      </Shell>
    </>
  );
}
